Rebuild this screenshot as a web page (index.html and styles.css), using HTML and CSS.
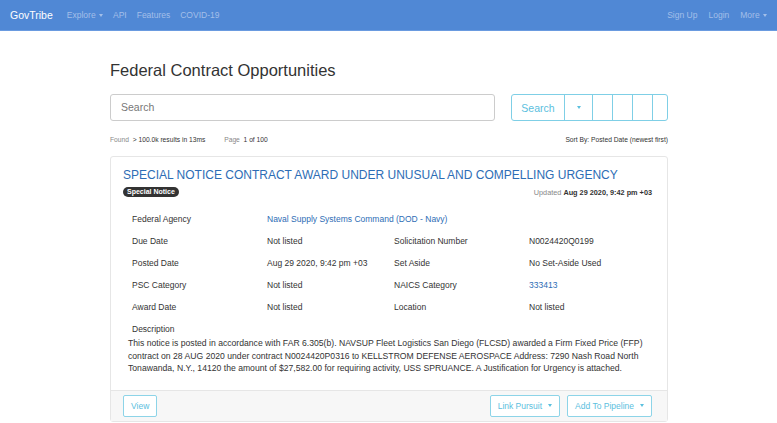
FILE: index.html
```html
<!DOCTYPE html>
<html>
<head>
<meta charset="utf-8">
<link rel="stylesheet" href="styles.css">
</head>
<body>
<nav class="navbar">
  <div class="nav-left">
    <span class="brand">GovTribe</span>
    <span class="nav-link">Explore <span class="caret"></span></span>
    <span class="nav-link">API</span>
    <span class="nav-link">Features</span>
    <span class="nav-link">COVID-19</span>
  </div>
  <div class="nav-right">
    <span class="nav-link">Sign Up</span>
    <span class="nav-link">Login</span>
    <span class="nav-link">More <span class="caret"></span></span>
  </div>
</nav>
<main class="container">
  <h1 class="page-title">Federal Contract Opportunities</h1>
  <div class="search-row">
    <div class="search-input">Search</div>
    <div class="btn-group">
      <span class="bg-btn bg-search">Search</span>
      <span class="bg-btn bg-caret"><span class="caret"></span></span>
      <span class="bg-btn bg-empty"></span>
      <span class="bg-btn bg-empty"></span>
      <span class="bg-btn bg-empty"></span>
      <span class="bg-btn bg-last"></span>
    </div>
  </div>
  <div class="meta-row">
    <div class="meta-left"><span class="muted">Found</span>&nbsp; &gt; 100.0k results in 13ms <span class="page-info"><span class="muted">Page</span>&nbsp; 1 of 100</span></div>
    <div class="meta-right">Sort By: Posted Date (newest first)</div>
  </div>
  <section class="card">
    <div class="card-body">
      <h2 class="card-title">SPECIAL NOTICE CONTRACT AWARD UNDER UNUSUAL AND COMPELLING URGENCY</h2>
      <div class="sub-row">
        <span class="badge">Special Notice</span>
        <span class="updated"><span class="muted">Updated</span> <b>Aug 29 2020, 9:42 pm +03</b></span>
      </div>
      <div class="fields">
        <div class="f-label">Federal Agency</div>
        <div class="f-value wide"><span class="link">Naval Supply Systems Command (DOD - Navy)</span></div>
        <div class="f-label">Due Date</div>
        <div class="f-value">Not listed</div>
        <div class="f-label">Solicitation Number</div>
        <div class="f-value">N0024420Q0199</div>
        <div class="f-label">Posted Date</div>
        <div class="f-value">Aug 29 2020, 9:42 pm +03</div>
        <div class="f-label">Set Aside</div>
        <div class="f-value">No Set-Aside Used</div>
        <div class="f-label">PSC Category</div>
        <div class="f-value">Not listed</div>
        <div class="f-label">NAICS Category</div>
        <div class="f-value"><span class="link">333413</span></div>
        <div class="f-label">Award Date</div>
        <div class="f-value">Not listed</div>
        <div class="f-label">Location</div>
        <div class="f-value">Not listed</div>
        <div class="f-label">Description</div>
      </div>
      <p class="desc">This notice is posted in accordance with FAR 6.305(b). NAVSUP Fleet Logistics San Diego (FLCSD) awarded a Firm Fixed Price (FFP) contract on 28 AUG 2020 under contract N0024420P0316 to KELLSTROM DEFENSE AEROSPACE Address: 7290 Nash Road North Tonawanda, N.Y., 14120 the amount of $27,582.00 for requiring activity, USS SPRUANCE. A Justification for Urgency is attached.</p>
    </div>
    <div class="card-footer">
      <span class="obtn">View</span>
      <div class="footer-right">
        <span class="obtn">Link Pursuit <span class="caret"></span></span>
        <span class="obtn">Add To Pipeline <span class="caret"></span></span>
      </div>
    </div>
  </section>
</main>
</body>
</html>
```
FILE: styles.css
```css
* { box-sizing: border-box; }
html, body { margin: 0; padding: 0; }
body {
  font-family: "Liberation Sans", Arial, sans-serif;
  color: #333;
  background: #fff;
  font-size: 9px;
  width: 777px;
  height: 423px;
  overflow: hidden;
}
.navbar {
  height: 31px;
  background: #5088d5;
  display: flex;
  justify-content: space-between;
  align-items: center;
  padding: 0 10px 0 10px;
  border-bottom: 1px solid #6a9be0;
}
.nav-left, .nav-right { display: flex; align-items: center; }
.brand { color: #fff; font-size: 10.5px; margin-right: 14px; }
.nav-link { color: #a3bfe9; font-size: 8.5px; margin-right: 10px; }
.nav-right .nav-link { margin-right: 0; margin-left: 11px; }
.caret {
  display: inline-block;
  width: 0; height: 0;
  border-left: 2.5px solid transparent;
  border-right: 2.5px solid transparent;
  border-top: 3px solid currentColor;
  vertical-align: middle;
  margin-left: 1px;
}
.container {
  width: 559px;
  margin: 0 auto;
  padding-left: 1px;
}
.page-title {
  font-size: 16.5px;
  font-weight: normal;
  color: #333;
  margin: 29px 0 0 0;
  line-height: 20px;
}
.search-row {
  display: flex;
  justify-content: space-between;
  margin-top: 14px;
}
.search-input {
  width: 385px;
  height: 27px;
  border: 1px solid #ccc;
  border-radius: 3px;
  color: #777;
  font-size: 10.5px;
  line-height: 25px;
  padding-left: 10px;
}
.btn-group {
  display: flex;
  height: 27px;
  border: 1px solid #7fcfe6;
  border-radius: 3px;
}
.bg-btn {
  display: flex;
  align-items: center;
  justify-content: center;
  color: #5bc0de;
  border-right: 1px solid #7fcfe6;
  height: 100%;
}
.bg-search { width: 53px; font-size: 10.5px; }
.bg-caret { width: 28px; }
.bg-empty { width: 20px; }
.bg-last { width: 14px; border-right: none; }
.meta-row {
  display: flex;
  justify-content: space-between;
  margin-top: 15px;
  font-size: 6.7px;
  line-height: 8px;
  color: #333;
}
.muted { color: #888; }
.page-info { margin-left: 17px; }
.card {
  margin-top: 12px;
  border: 1px solid #e6e6e6;
  border-radius: 3px;
}
.card-body { padding: 10px 15px 0 12px; }
.card-title {
  font-size: 12px;
  font-weight: normal;
  color: #2d6db5;
  margin: 0;
  line-height: 16px;
}
.sub-row {
  display: flex;
  justify-content: space-between;
  align-items: center;
  margin-top: 4px;
}
.badge {
  background: #333;
  color: #fff;
  font-weight: bold;
  font-size: 7px;
  border-radius: 5px;
  padding: 1px 4px;
  line-height: 8px;
}
.updated { font-size: 7.3px; color: #333; }
.fields {
  display: grid;
  grid-template-columns: 135px 127px 135px 1fr;
  grid-auto-rows: 22px;
  align-items: center;
  margin-top: 11px;
  padding-left: 9px;
  font-size: 8.5px;
  color: #333;
}
.f-value.wide { grid-column: span 3; }
.link { color: #2d6db5; }
.desc {
  margin: -3px 0 0 0;
  padding-left: 5px;
  font-size: 8.65px;
  line-height: 12.5px;
  color: #333;
}
.card-footer {
  margin-top: 15px;
  background: #f7f7f7;
  border-top: 1px solid #e6e6e6;
  display: flex;
  justify-content: space-between;
  padding: 4px 15px 4px 12px;
}
.footer-right { display: flex; gap: 7px; }
.obtn {
  display: inline-flex;
  align-items: center;
  gap: 3px;
  height: 22px;
  padding: 0 7px;
  border: 1px solid #8dd4e8;
  border-radius: 2px;
  color: #5bc0de;
  font-size: 8.5px;
  background: #fff;
}
.obtn .caret { margin-left: 3px; }
```
